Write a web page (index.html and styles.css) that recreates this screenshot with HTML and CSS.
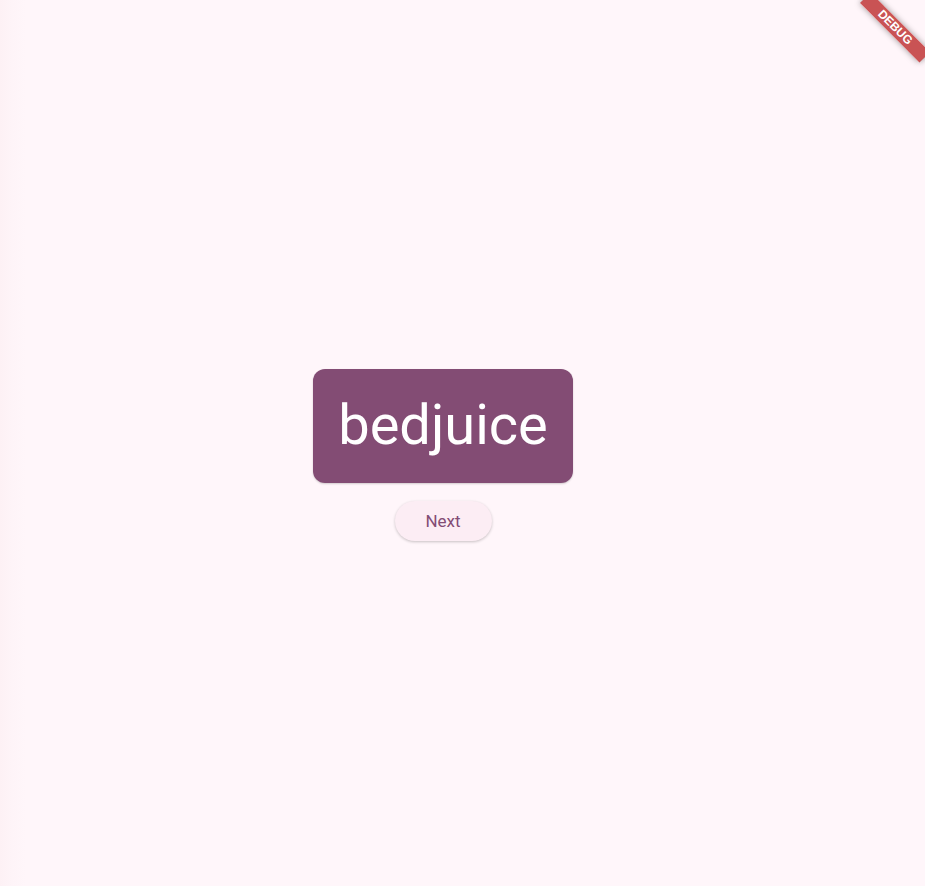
FILE: index.html
```
<!DOCTYPE html>
<html>
<head>
<meta charset="utf-8">
<link rel="stylesheet" href="styles.css">
</head>
<body>
<main class="stage">
  <div class="column">
    <div class="card"><span class="word">bedjuice</span></div>
    <button class="next">Next</button>
  </div>
</main>
<div class="banner">DEBUG</div>
</body>
</html>
```
FILE: styles.css
```
html, body {
  margin: 0;
  padding: 0;
  width: 925px;
  height: 886px;
  overflow: hidden;
}
body {
  background: linear-gradient(to right, #fdf1f5 0px, #fef4f8 12px, #fff6fa 26px, #fff6fa 100%);
  font-family: Roboto, "Noto Sans", sans-serif;
  position: relative;
}
.stage {
  width: 886px;
  height: 886px;
  box-sizing: border-box;
  padding-top: 369px;
  display: flex;
  justify-content: center;
}
.column {
  display: flex;
  flex-direction: column;
  align-items: center;
  gap: 18px;
}
.card {
  width: 260px;
  height: 114px;
  box-sizing: border-box;
  background: #834c74;
  border-radius: 12px;
  display: flex;
  align-items: center;
  justify-content: center;
  box-shadow: 0 1px 2px rgba(0,0,0,0.18);
}
.word {
  color: #ffffff;
  font-size: 56px;
  line-height: 1;
  font-weight: 400;
  position: relative;
  top: -1px;
}
.next {
  width: 97px;
  height: 40px;
  border: none;
  border-radius: 20px;
  background: #fcedf4;
  color: #834c74;
  font-family: Roboto, "Noto Sans", sans-serif;
  font-size: 17px;
  font-weight: 400;
  box-shadow: 0 1px 3px rgba(0,0,0,0.22);
  padding: 0;
  cursor: pointer;
}
.banner {
  position: absolute;
  top: 20px;
  right: -12px;
  width: 84px;
  height: 15px;
  transform: rotate(45deg);
  background: rgba(183, 28, 28, 0.75);
  color: #ffffff;
  font-family: "Liberation Sans", Roboto, sans-serif;
  font-size: 12px;
  font-weight: 900;
  line-height: 15px;
  text-align: center;
  box-shadow: 0 0 6px rgba(0,0,0,0.4);
}
```
